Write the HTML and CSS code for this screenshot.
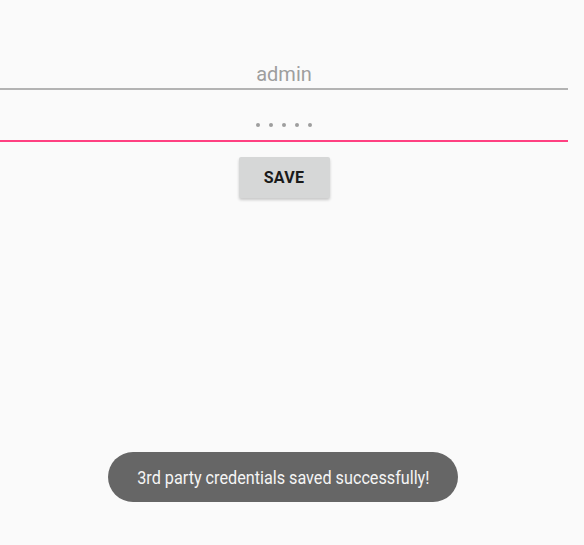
FILE: index.html
```html
<!DOCTYPE html>
<html lang="en">
<head>
    <meta charset="UTF-8">
    <meta name="viewport" content="width=device-width, initial-scale=1.0">
    <title>Credentials</title>
    <link rel="stylesheet" href="styles.css">
</head>
<body>
    <div class="form">
        <div class="field">admin</div>
        <div class="field password">
            <span class="dot"></span>
            <span class="dot"></span>
            <span class="dot"></span>
            <span class="dot"></span>
            <span class="dot"></span>
        </div>
        <button class="save">SAVE</button>
    </div>
    <div class="toast"><span>3rd party credentials saved successfully!</span></div>
</body>
</html>
```

FILE: styles.css
```css
body {
    margin: 0;
    height: 545px;
    overflow: hidden;
    background: #fafafa;
    font-family: Roboto, "Liberation Sans", sans-serif;
}
.form {
    width: 568px;
    padding-top: 54px;
    display: flex;
    flex-direction: column;
    align-items: center;
}
.field {
    align-self: stretch;
    padding: 8px 0 2px;
    font-size: 20px;
    line-height: 24px;
    color: #9e9e9e;
    text-align: center;
    border-bottom: 2px solid #b3b3b3;
}
.password {
    display: flex;
    justify-content: center;
    gap: 9px;
    padding: 33px 0 13px;
    border-bottom-color: #ff4081;
}
.dot {
    width: 4px;
    height: 4px;
    border-radius: 50%;
    background: #9e9e9e;
}
.save {
    margin-top: 15px;
    width: 91px;
    height: 41px;
    border: none;
    border-radius: 2px;
    background: #d6d7d7;
    color: #1a1a1a;
    font-family: Roboto, "Liberation Sans", sans-serif;
    font-size: 16px;
    font-weight: 700;
    letter-spacing: 0.3px;
    box-shadow: 0 2px 3px rgba(0, 0, 0, 0.2);
}
.toast {
    position: fixed;
    left: 108px;
    top: 452px;
    width: 350px;
    height: 50px;
    border-radius: 25px;
    background: #666666;
    color: #f5f5f5;
    font-size: 18px;
    display: flex;
    justify-content: center;
    align-items: center;
}
.toast span {
    display: inline-block;
    white-space: nowrap;
    transform: scaleX(0.9);
}
```
